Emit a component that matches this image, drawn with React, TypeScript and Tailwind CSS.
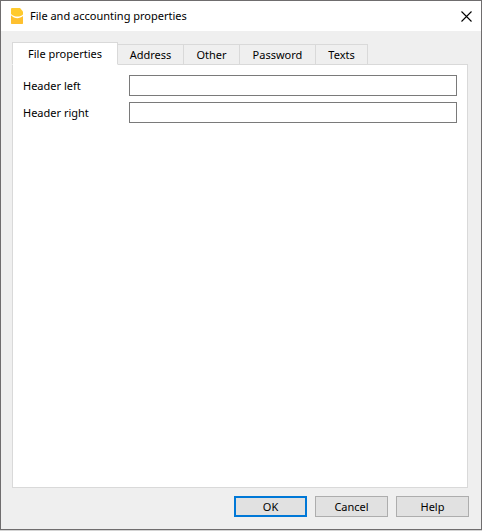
import { useState } from "react";

const tabs = [
  { name: "File properties", width: "w-[106px]" },
  { name: "Address", width: "w-[66px]" },
  { name: "Other", width: "w-[56px]" },
  { name: "Password", width: "w-[76px]" },
  { name: "Texts", width: "w-[52px]" },
];

const fields = [
  { id: "header-left", label: "Header left" },
  { id: "header-right", label: "Header right" },
];

function AppIcon() {
  return (
    <svg width="12" height="16" viewBox="0 0 12 16" aria-hidden="true">
      <path d="M0.500 0H9L12 3.500V6.500C9 9.400 3.500 9.400 0 6V0.500z" fill="#ffca2e" />
      <path d="M0 7.300C3.500 11 8.500 11 12 8V15.500L11.500 16H0.500L0 15.500z" fill="#fec02f" />
    </svg>
  );
}

function TitleBar() {
  return (
    <header className="flex h-[30px] items-center bg-white pl-[10px] pr-[9px]">
      <AppIcon />
      <h1 className="ml-[7px] flex-1">File and accounting properties</h1>
      <button type="button" aria-label="Close" className="flex">
        <svg width="11" height="11" viewBox="0 0 11 11" aria-hidden="true">
          <path d="M0.500 0.500l10 10M10.500 0.500l-10 10" stroke="#000" strokeWidth="1.1" />
        </svg>
      </button>
    </header>
  );
}

export default function App() {
  const [active, setActive] = useState(0);

  return (
    <div className="flex min-h-screen flex-col bg-[#d4d4d4] pb-px font-['Noto_Sans','Segoe_UI',sans-serif] text-[11px] leading-4 text-black">
      <main className="flex flex-1 flex-col border border-[#6f6d6e] bg-[#efefef]">
        <TitleBar />
        <div className="flex flex-1 flex-col pb-3 pl-[11px] pr-3 pt-[11px]">
          <div role="tablist" className="relative -mb-px flex items-end pr-4">
            {tabs.map((tab, i) => (
              <button
                key={tab.name}
                type="button"
                role="tab"
                aria-selected={i === active}
                onClick={() => setActive(i)}
                className={`${tab.width} border border-[#d9d9d9] text-center whitespace-nowrap ${
                  i === active ? "h-[23px] border-b-white bg-white" : "h-[21px] border-l-0 bg-[#efefef]"
                }`}
              >
                {tab.name}
              </button>
            ))}
          </div>
          <section role="tabpanel" className="mr-px flex flex-1 flex-col gap-[6px] border border-[#d9d9d9] bg-white px-[10px] py-[10px]">
            {active === 0 &&
              fields.map((field) => (
                <div key={field.id} className="flex h-[21px] items-center">
                  <label htmlFor={field.id} className="w-[106px]">
                    {field.label}
                  </label>
                  <input
                    id={field.id}
                    type="text"
                    className="h-[21px] min-w-0 flex-1 border border-[#7a7a7a] bg-white px-1 outline-none"
                  />
                </div>
              ))}
          </section>
          <footer className="mt-2 flex justify-end gap-2">
            <button type="button" className="h-[21px] w-[73px] border-2 border-[#0078d7] bg-[#e1e1e1] leading-4">
              OK
            </button>
            <button type="button" className="h-[21px] w-[73px] border border-[#adadad] bg-[#e1e1e1] leading-4">
              Cancel
            </button>
            <button type="button" className="h-[21px] w-[73px] border border-[#adadad] bg-[#e1e1e1] leading-4">
              Help
            </button>
          </footer>
        </div>
      </main>
    </div>
  );
}
